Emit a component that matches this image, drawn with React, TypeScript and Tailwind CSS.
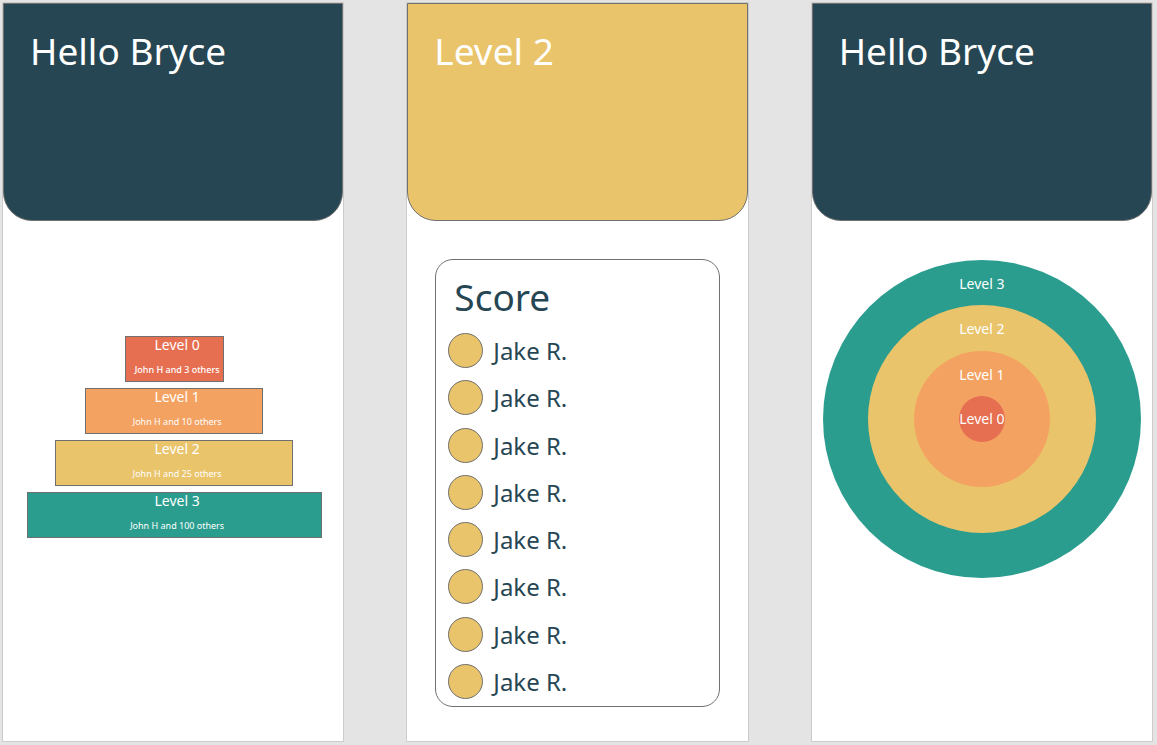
import type { ReactNode } from "react";

const steps = [
  { name: "Level 0", people: "John H and 3 others", box: "w-[99px] bg-[#e76f51]", weight: "font-medium" },
  { name: "Level 1", people: "John H and 10 others", box: "w-[178px] bg-[#f4a261]", weight: "font-normal" },
  { name: "Level 2", people: "John H and 25 others", box: "w-[238px] bg-[#e9c46a]", weight: "font-normal" },
  { name: "Level 3", people: "John H and 100 others", box: "w-[295px] bg-[#2a9d8f]", weight: "font-normal" },
];

const rings = [
  { name: "Level 3", style: "size-[318px] items-start pt-4 bg-[#2a9d8f]" },
  { name: "Level 2", style: "size-[228px] items-start pt-4 bg-[#e9c46a]" },
  { name: "Level 1", style: "size-[136px] items-start pt-4 bg-[#f4a261]" },
  { name: "Level 0", style: "size-[46px] items-center bg-[#e76f51]" },
];

const players = Array.from({ length: 8 }, (_, id) => ({ id, name: "Jake R." }));

function Screen({ title, color, children }: { title: string; color: string; children: ReactNode }) {
  return (
    <section className="flex min-w-0 flex-col border border-[#cccccc] bg-white">
      <header className={`h-[218px] shrink-0 rounded-b-[29px] border border-[#707070] px-[26px] pt-[23px] ${color}`}>
        <h1 className="text-[37px] leading-[48px] whitespace-nowrap text-white">{title}</h1>
      </header>
      {children}
    </section>
  );
}

export default function App() {
  return (
    <main className="grid min-h-screen grid-cols-3 gap-[62px] bg-[#e4e4e4] pt-[2px] pr-1 pb-[3px] pl-[2px] font-['Noto_Sans',sans-serif]">
      <Screen title="Hello Bryce" color="bg-[#264653]">
        <ul className="flex flex-col items-center gap-[6px] pt-[115px] pl-[2px]">
          {steps.map((step) => (
            <li
              key={step.name}
              className={`flex h-[46px] flex-col items-center gap-[9px] border border-[#707070] pl-[6px] text-center whitespace-nowrap text-white ${step.box}`}
            >
              <span className="text-[14px] leading-4">{step.name}</span>
              <span className={`text-[9px] leading-4 ${step.weight}`}>{step.people}</span>
            </li>
          ))}
        </ul>
      </Screen>

      <Screen title="Level 2" color="bg-[#e9c46a]">
        <div className="mx-7 mt-[38px] mb-[34px] flex flex-1 flex-col rounded-[18px] border border-[#707070] px-3 pt-[13px] pb-[7px] text-[#264653]">
          <h2 className="pl-[6px] text-[37px] leading-[48px]">Score</h2>
          <ul className="mt-3 flex flex-1 flex-col justify-between">
            {players.map((player) => (
              <li key={player.id} className="flex items-center gap-[10px]">
                <span className="size-[35px] rounded-full border border-[#707070] bg-[#e9c46a]" />
                <span className="text-[24px] leading-[35px]">{player.name}</span>
              </li>
            ))}
          </ul>
        </div>
      </Screen>

      <Screen title="Hello Bryce" color="bg-[#264653]">
        <div className="mt-[39px] grid place-items-center">
          {rings.map((ring) => (
            <div
              key={ring.name}
              className={`col-start-1 row-start-1 flex justify-center rounded-full text-[14px] leading-4 whitespace-nowrap text-white ${ring.style}`}
            >
              {ring.name}
            </div>
          ))}
        </div>
      </Screen>
    </main>
  );
}
